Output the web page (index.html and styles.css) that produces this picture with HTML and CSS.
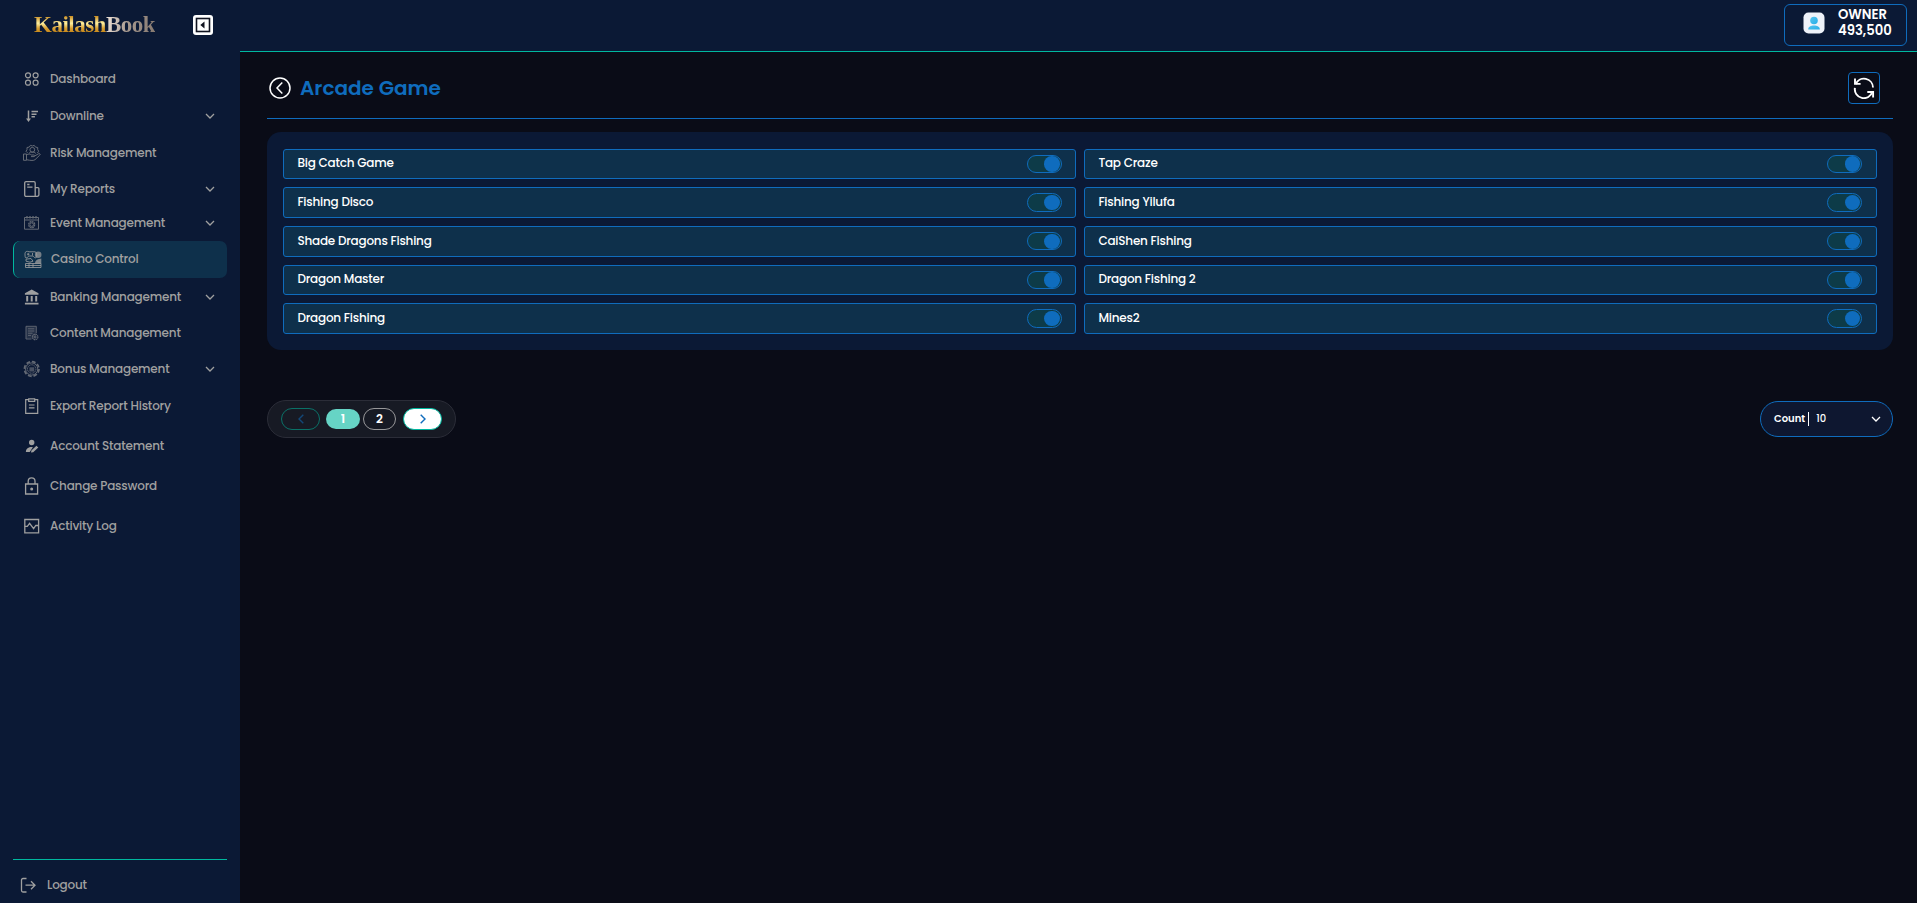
FILE: index.html
```html
<!DOCTYPE html>
<html lang="en">
<head>
    <meta charset="UTF-8">
    <meta name="viewport" content="width=device-width, initial-scale=1.0">
    <title>Arcade Game</title>
    <link rel="stylesheet" href="styles.css">
</head>
<body>
    <svg class="sprite">
        <symbol id="chevron" viewBox="0 0 10 6"><path d="M1 1l4 4 4-4" fill="none" stroke="currentColor" stroke-width="1.3"/></symbol>
    </svg>
    <aside class="sidebar">
        <div class="brand">
            <div class="logo"><span class="gold">Kailash</span><span class="silver">Book</span></div>
            <button class="collapse-btn">
                <svg width="20" height="20" viewBox="0 0 20 20"><rect x="3.5" y="3.5" width="13" height="13" fill="none" stroke="#10131f" stroke-width="1.6"/><path d="M11.5 6.5v7L7.3 10z" fill="#10131f"/></svg>
            </button>
        </div>
        <nav class="menu">
            <a class="item">
                <svg class="icon" viewBox="0 0 18 18"><g fill="none" stroke="currentColor" stroke-width="1.2"><circle cx="5" cy="5.3" r="2.5"/><circle cx="12.6" cy="5.3" r="2.5"/><circle cx="5" cy="12.7" r="2.5"/><circle cx="12.6" cy="12.7" r="2.5"/></g></svg>
                <span class="label">Dashboard</span>
            </a>
            <a class="item">
                <svg class="icon" viewBox="0 0 18 18"><g fill="none" stroke="currentColor" stroke-width="1.5"><path d="M5.5 3.5v9M8.5 4.500h6.500M8.500 7.200h5M8.500 9.800h3.400"/></g><path d="M3 11.500h5L5.500 15z" fill="currentColor"/></svg>
                <span class="label">Downline</span>
                <svg class="chev"><use href="#chevron"/></svg>
            </a>
            <a class="item">
                <svg class="icon dim" viewBox="0 0 18 18"><g fill="none" stroke="currentColor" stroke-width="1"><path d="M4.500 8.800L3 7.300l1-1.700V3.500l2.200-.4L7.500 1.300l1.800.7 1.900-.7 1.300 1.800 2.200.4v2.100l1 1.700-1.300 1.700"/><circle cx="9.300" cy="5.800" r="2.400"/><path d="M6 9.300l1.500-1.200h3.600l1.700 1.300"/><path d="M.5 10h3v6.300h-3zM3.500 11c2-1.600 3.500-1 5 0h2.500c1 0 1 1.600 0 1.600H8M11.700 12l4-2.300c1.300-.5 2 .8 1 1.500L12 15.700c-1.200 1-4 1-8.500 0"/></g></svg>
                <span class="label">Risk Management</span>
            </a>
            <a class="item short">
                <svg class="icon" viewBox="0 0 18 18"><g fill="none" stroke="currentColor" stroke-width="1.3"><path d="M12.200 16.300H3A1.300 1.300 0 0 1 1.700 15V3A1.300 1.300 0 0 1 3 1.700h7.900A1.300 1.300 0 0 1 12.200 3zM12.200 7.600h2.700a1 1 0 0 1 1 1v6.100a1.600 1.600 0 0 1-1.600 1.600h-2.100M4.200 4.500h2.300M4.200 7.200h5.300"/></g></svg>
                <span class="label">My Reports</span>
                <svg class="chev"><use href="#chevron"/></svg>
            </a>
            <a class="item short event">
                <svg class="icon dim" viewBox="0 0 18 18"><g fill="none" stroke="currentColor" stroke-width="1"><path d="M1.500 3.500h14v11.700h-14zM1.500 6h14"/><path d="M4 2v2.500M7 2v2.500M10 2v2.500M13 2v2.500" stroke-width="1.300"/><circle cx="8.700" cy="10.600" r="3" stroke-width="1.300" stroke-dasharray="1.800 .5"/><circle cx="8.700" cy="10.600" r="1.800"/></g></svg>
                <span class="label">Event Management</span>
                <svg class="chev"><use href="#chevron"/></svg>
            </a>
            <a class="item active">
                <svg class="icon" viewBox="0 0 18 18"><g fill="none" stroke="currentColor" stroke-width=".8"><path d="M1 3.500c0-2 2-2.700 4-1.700h6c2 0 2.500 6 .5 6C10 7.800 9.800 6 8.500 6h-3C4 6 3.700 8 2 8 1 8 1 5.500 1 3.500zM3 4.200h2.500M4.200 3v2.500M8.500 3v2.500"/><path d="M2 9.200l5-.7 2 2.700-3 1-4-1zM1.500 13.500h15.500v4H1.500zM1.500 15.500h15.500M5 13.500v4M9 13.500v4"/></g><circle cx="14.200" cy="4.700" r="3.300" fill="currentColor" opacity=".7"/><path d="M11 13.200c0-2 1-3 3-4l3.300-.7v5H11z" fill="currentColor" opacity=".75"/></svg>
                <span class="label">Casino Control</span>
            </a>
            <a class="item">
                <svg class="icon" viewBox="0 0 18 18"><path fill="currentColor" d="M8.700 1.500l6.800 3.800v1.500h-13.600V5.300zM3.200 8h2v5.500h-2zM7.700 8h2v5.500h-2zM12.200 8h2v5.500h-2zM1.900 14.700h13.600v1.700H1.900z"/></svg>
                <span class="label">Banking Management</span>
                <svg class="chev"><use href="#chevron"/></svg>
            </a>
            <a class="item medium">
                <svg class="icon dim" viewBox="0 0 18 18"><path d="M3 2.500h10v12H3z" fill="currentColor" opacity=".3"/><g fill="none" stroke="currentColor" stroke-width=".9"><path d="M8.500 15H3V2.300h10.300v7M5 4.800h6.300M5 7h6.300M5 9.200h4.500M5 11.400h3"/><circle cx="12.200" cy="13" r="2.700" stroke-width="1.100" stroke-dasharray="1.600 .5"/><circle cx="12.200" cy="13" r="1"/></g></svg>
                <span class="label">Content Management</span>
            </a>
            <a class="item medium">
                <svg class="icon dim" viewBox="0 0 18 18"><g fill="none" stroke="currentColor" stroke-width="1"><circle cx="8.700" cy="9" r="7.300" stroke-width="1.700" stroke-dasharray="3.800 1.930"/><circle cx="8.700" cy="9" r="6.100"/><circle cx="8.700" cy="9" r="4.200" stroke-dasharray="1.300 .5"/></g><path d="M6.400 7.300h4.800v4.200H6.400z" fill="currentColor" opacity=".7"/></svg>
                <span class="label">Bonus Management</span>
                <svg class="chev"><use href="#chevron"/></svg>
            </a>
            <a class="item report">
                <svg class="icon" viewBox="0 0 18 18"><g fill="none" stroke="currentColor" stroke-width="1.200"><path d="M5.700 2.600H2.700v13.800h12V2.600h-3M5.700 1.800h6v2.600h-6zM5.900 8h5.600M5.900 10.900h5.600"/></g></svg>
                <span class="label">Export Report History</span>
            </a>
            <a class="item tall">
                <svg class="icon" viewBox="0 0 18 18"><g fill="currentColor"><circle cx="8.700" cy="5.500" r="2.700"/><path d="M2.900 15c0-3 2.500-4.900 6-4.900l1 .1-3.200 4.800zM8 15.500l.4-2.100 5-4.700 1.900 1.800-5.100 4.700z"/></g></svg>
                <span class="label">Account Statement</span>
            </a>
            <a class="item tall">
                <svg class="icon" viewBox="0 0 18 18"><g fill="none" stroke="currentColor" stroke-width="1.300"><path d="M2.600 7h12v10h-12z"/><path d="M5.200 7V4.300a3.400 3.400 0 0 1 6.800 0V7"/></g><circle cx="8.700" cy="12" r="1.500" fill="currentColor"/></svg>
                <span class="label">Change Password</span>
            </a>
            <a class="item tall">
                <svg class="icon" viewBox="0 0 18 18"><g fill="none" stroke="currentColor" stroke-width="1.300"><path d="M1.800 2.500h13.800v13.300H1.800z"/><path d="M1.800 9.300h2.500l2.300-3 4 5.400 2.200-3.200h2.800"/></g></svg>
                <span class="label">Activity Log</span>
            </a>
        </nav>
        <div class="logout">
            <svg class="icon" viewBox="0 0 18 18"><g fill="none" stroke="currentColor" stroke-width="1.300"><path d="M7.500 2.500H4A1.500 1.500 0 0 0 2.500 4v10.500A1.500 1.500 0 0 0 4 16h3.500M6.500 9.200h9.300M12 5.200l4 4-4 4"/></g></svg>
            <span class="label">Logout</span>
        </div>
    </aside>

    <div class="page">
        <header class="topbar">
            <div class="user">
                <svg width="22" height="22" viewBox="0 0 22 22">
                    <defs><linearGradient id="person" x1="0" y1="0" x2="1" y2="1"><stop offset="0" stop-color="#58c4ee"/><stop offset="1" stop-color="#25aee8"/></linearGradient></defs>
                    <rect x=".5" y=".5" width="21" height="21" rx="5" fill="#eef2f9"/>
                    <circle cx="11" cy="8.500" r="3.800" fill="url(#person)"/>
                    <path d="M5.200 17.500c0-3 2.600-4 5.800-4s5.800 1 5.800 4z" fill="url(#person)"/>
                </svg>
                <div class="user-text"><span class="role">OWNER</span><span class="amount">493,500</span></div>
            </div>
        </header>
        <main class="content">
            <div class="title-bar">
                <svg class="back" viewBox="0 0 22 22"><g fill="none" stroke="#fff" stroke-width="1.500"><circle cx="11" cy="11" r="10"/><path d="M13.300 5.500L8 11l5.300 5.500"/></g></svg>
                <h1>Arcade Game</h1>
                <button class="refresh">
                    <svg width="22" height="22" viewBox="0 0 22 22"><g fill="none" stroke="#fff" stroke-width="1.900"><path d="M2.800 7A9 9 0 0 1 20 10.600M1.900 10.800A9 9 0 0 0 19.400 14.800"/><path d="M2 1.600v5.300h5.600M14.300 15h5.800v5.500"/></g></svg>
                </button>
            </div>

            <section class="games">
                <div class="game"><span>Big Catch Game</span><i class="switch"></i></div>
                <div class="game"><span>Tap Craze</span><i class="switch"></i></div>
                <div class="game"><span>Fishing Disco</span><i class="switch"></i></div>
                <div class="game"><span>Fishing Yilufa</span><i class="switch"></i></div>
                <div class="game"><span>Shade Dragons Fishing</span><i class="switch"></i></div>
                <div class="game"><span>CaiShen Fishing</span><i class="switch"></i></div>
                <div class="game"><span>Dragon Master</span><i class="switch"></i></div>
                <div class="game"><span>Dragon Fishing 2</span><i class="switch"></i></div>
                <div class="game"><span>Dragon Fishing</span><i class="switch"></i></div>
                <div class="game"><span>Mines2</span><i class="switch"></i></div>
            </section>

            <div class="footer">
                <div class="pagination">
                    <button class="arrow prev"><svg width="6" height="10" viewBox="0 0 6 10"><path d="M5.300.7L1 5l4.300 4.300" fill="none" stroke="currentColor" stroke-width="1.400"/></svg></button>
                    <button class="num current">1</button>
                    <button class="num">2</button>
                    <button class="arrow next"><svg width="6" height="10" viewBox="0 0 6 10"><path d="M.7.7L5 5 .7 9.300" fill="none" stroke="currentColor" stroke-width="1.400"/></svg></button>
                </div>
                <div class="count">
                    <span class="count-label">Count</span>
                    <span class="count-value">10</span>
                    <svg class="chev"><use href="#chevron"/></svg>
                </div>
            </div>
        </main>
    </div>
</body>
</html>
```
FILE: styles.css
```css
* {
    box-sizing: border-box;
}

body {
    margin: 0;
    height: 903px;
    display: flex;
    overflow: hidden;
    background: #0a0c17;
    color: #fff;
    font-family: Poppins, Inter, sans-serif;
    font-weight: 500;
}

button {
    padding: 0;
    border: none;
    font: inherit;
    color: inherit;
    display: flex;
    align-items: center;
    justify-content: center;
    cursor: pointer;
}

.sprite {
    display: none;
}

/* sidebar */
.sidebar {
    width: 240px;
    height: 903px;
    flex: none;
    display: flex;
    flex-direction: column;
    background: #0b1935;
    color: #a0a0a0;
    padding: 0 13px;
}

.brand {
    height: 60px;
    padding: 15px 14px 0 21px;
    display: flex;
    justify-content: space-between;
    align-items: flex-start;
}

.logo {
    font-family: "Liberation Serif", serif;
    font-size: 23px;
    font-weight: bold;
    line-height: 20px;
    letter-spacing: -0.5px;
    white-space: nowrap;
}

.gold,
.silver {
    color: transparent;
    background-clip: text;
    -webkit-background-clip: text;
}

.gold {
    background-image: linear-gradient(#c98a1c 15%, #fff0a0 45%, #d9a032 65%, #c98a1c 80%);
}

.silver {
    background-image: linear-gradient(100deg, #f3e7dc, #a7998f 45%, #85786f);
}

.collapse-btn {
    width: 20px;
    height: 20px;
    background: #fff;
    border-radius: 3px;
}

.menu {
    display: flex;
    flex-direction: column;
}

.item {
    height: 37px;
    padding: 0 12px 0 10px;
    display: flex;
    align-items: center;
    font-size: 12px;
    letter-spacing: -0.2px;
}

.item.short {
    height: 35px;
}

.item.event {
    padding-bottom: 1px;
}

.item.medium {
    height: 36px;
}

.item.report {
    height: 39px;
    padding-bottom: 1px;
}

.item.tall {
    height: 40px;
}

.item.active {
    padding-bottom: 1px;
    background: #0e304b;
    border-left: 1px solid #00b89f;
    border-radius: 7px;
}

.icon {
    width: 18px;
    height: 18px;
    flex: none;
    margin-right: 9px;
}

.dim {
    opacity: .6;
}

.label {
    flex: 1;
    white-space: nowrap;
}

.chev {
    width: 10px;
    height: 6px;
    flex: none;
}

.logout {
    margin-top: auto;
    height: 44px;
    padding: 6px 0 0 6px;
    border-top: 1px solid #00b89f;
    display: flex;
    align-items: center;
    font-size: 12px;
    letter-spacing: -0.2px;
}

.logout .icon {
    margin-right: 10px;
}

/* header */
.page {
    flex: 1;
    min-width: 0;
}

.topbar {
    height: 52px;
    padding: 4px 10px 0 0;
    display: flex;
    justify-content: flex-end;
    background: #0b1935;
    border-bottom: 1px solid #00b89f;
}

.user {
    width: 123px;
    height: 42px;
    padding: 0 0 4px 18px;
    display: flex;
    align-items: center;
    gap: 13px;
    border: 1px solid #0f6cbd;
    border-radius: 6px;
}

.user-text {
    display: flex;
    flex-direction: column;
    padding-bottom: 1px;
    font-size: 13.2px;
    font-weight: 600;
    line-height: 16px;
}

/* content */
.content {
    padding: 0 24px 0 27px;
}

.title-bar {
    height: 67px;
    padding: 5px 13px 0 2px;
    display: flex;
    align-items: center;
    border-bottom: 1px solid #0f6cbd;
}

.back {
    width: 22px;
    height: 22px;
    margin-right: 9px;
}

h1 {
    margin: 0;
    flex: 1;
    font-size: 20px;
    font-weight: 600;
    color: #0f6cbd;
}

.refresh {
    width: 32px;
    height: 32px;
    background: none;
    border: 1px solid #0f6cbd;
    border-radius: 4px;
}

.games {
    margin-top: 13.4px;
    padding: 16.4px 16px;
    display: grid;
    grid-template-columns: 1fr 1fr;
    gap: 8px;
    background: #0b1935;
    border-radius: 14px;
}

.game {
    height: 30.6px;
    padding: 0 13.3px 0 13.4px;
    display: flex;
    align-items: center;
    justify-content: space-between;
    background: #0e304b;
    border: 1px solid #0f6cbd;
    border-radius: 3px;
    font-size: 12px;
    letter-spacing: -0.22px;
}

.game:nth-child(even) {
    padding-right: 13.6px;
}

.game span {
    padding-bottom: 1.4px;
}

.switch {
    width: 35px;
    height: 18.4px;
    padding: 0 1px;
    display: flex;
    align-items: center;
    justify-content: flex-end;
    background: #0d3b48;
    border: 1px solid #0f6cbd;
    border-radius: 10px;
}

.switch::after {
    content: "";
    width: 15.5px;
    height: 15.5px;
    border-radius: 50%;
    background: #0f6cbd;
}

.footer {
    margin-top: 50px;
    display: flex;
    justify-content: space-between;
    align-items: center;
}

.pagination {
    height: 38px;
    padding: 0 13px;
    display: flex;
    align-items: center;
    background: #171a24;
    border: 1px solid #2b2d38;
    border-radius: 19px;
}

.arrow {
    width: 39px;
    height: 22px;
    border: 1px solid #00b89f;
    border-radius: 11px;
    color: #0f6cbd;
}

.prev {
    background: none;
    opacity: .55;
    margin-right: 6px;
}

.next {
    background: #fff;
    margin-left: 7px;
}

.num {
    width: 33px;
    height: 22px;
    background: none;
    border: 1px solid #98989a;
    border-radius: 11px;
    font-size: 12px;
    font-weight: 600;
}

.num.current {
    width: 34px;
    height: 20px;
    margin-right: 3px;
    background: #66d4c5;
    border: none;
}

.count {
    width: 133px;
    height: 36px;
    padding: 0 11px 0 13px;
    display: flex;
    align-items: center;
    background: #0e1730;
    border: 1px solid #0f6cbd;
    border-radius: 18px;
    font-size: 10px;
}

.count-label {
    height: 14px;
    line-height: 14px;
    padding-right: 3px;
    border-right: 1px solid #fff;
    font-weight: 600;
}

.count-value {
    flex: 1;
    padding-left: 7px;
}

.count .chev {
    width: 10px;
    height: 6px;
}
```
